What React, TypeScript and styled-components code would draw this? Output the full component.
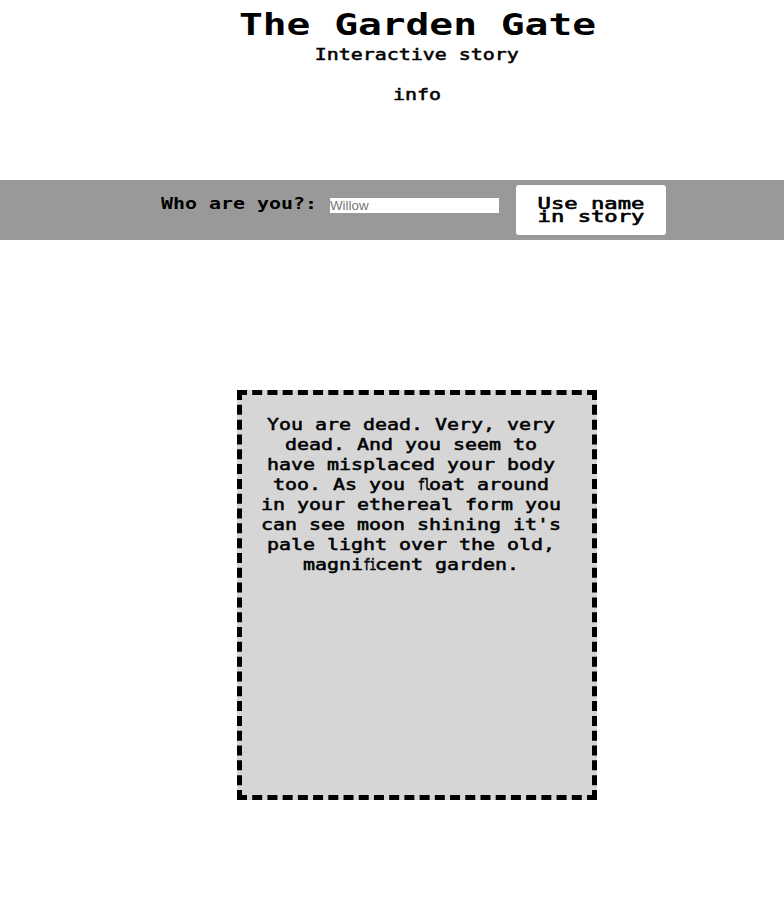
import React from "react";
import styled, { createGlobalStyle } from "styled-components";

const GlobalStyle = createGlobalStyle`
  * { box-sizing: border-box; }
  body { margin: 0; background: #fff; color: #000; overflow-x: hidden; }
`;

const Page = styled.main`
  width: 784px;
  height: 913px;
  overflow: hidden;
  font-family: "DejaVu Sans Mono", monospace;
`;

const Header = styled.header`
  height: 180px;
  padding: 4px 0 0 50px;
  display: flex;
  flex-direction: column;
  align-items: center;
`;

/* Monospace lettering widened to resemble an old terminal face. */
const Wide = styled.span<{ $stretch?: number; $origin?: string }>`
  display: block;
  white-space: nowrap;
  transform: scaleX(${(p) => p.$stretch ?? 1.329});
  transform-origin: ${(p) => p.$origin ?? "center"};
`;

const Title = styled.h1`
  margin: 0;
  font-size: 30px;
  font-weight: 700;
  line-height: 41px;
`;

const Subtitle = styled.p`
  margin: 0;
  font-size: 15px;
  line-height: 20px;
  -webkit-text-stroke: 0.5px #000;
`;

const InfoLink = styled.a`
  margin-top: 20px;
  font-size: 15px;
  line-height: 20px;
  color: #000;
  -webkit-text-stroke: 0.5px #000;
`;

const NameBar = styled.form`
  height: 60px;
  padding-left: 161px;
  display: flex;
  align-items: flex-start;
  background: #999;
`;

const Label = styled.label`
  width: 169px;
  padding-top: 14px;
  font-size: 15px;
  font-weight: 700;
  line-height: 20px;
`;

const NameInput = styled.input`
  width: 169px;
  height: 15px;
  margin: 18px 17px 0 0;
  padding: 0;
  border: 0;
  outline: 0;
  background: #fff;
  font: 13.333px/15px "Liberation Sans", sans-serif;
  &::placeholder { color: #757575; }
`;

const UseButton = styled.button`
  width: 150px;
  height: 50px;
  margin-top: 5px;
  padding: 1px 0 0;
  border: 0;
  border-radius: 3px;
  background: #fff;
  color: #000;
  font: 15px/13px "DejaVu Sans Mono", monospace;
  -webkit-text-stroke: 0.6px #000;
`;

const StoryCard = styled.section`
  width: 360px;
  height: 410px;
  margin: 150px 0 0 237px;
  padding: 20px 12px 0 0;
  border: 5px dashed #000;
  background: #d6d6d6;
`;

const Story = styled.p`
  margin: 0;
  font-size: 15px;
  line-height: 20px;
  text-align: center;
  -webkit-text-stroke: 0.5px #000;
`;

/* Letter pair condensed into one character cell. */
const Pair = styled.span`
  display: inline-block;
  width: 9.03px;
  height: 20px;
  vertical-align: top;
  text-align: left;
  letter-spacing: -1.5px;
  transform: scaleX(0.6);
  transform-origin: left;
`;

const lines: React.ReactNode[] = [
  "You are dead. Very, very",
  "dead. And you seem to",
  "have misplaced your body",
  <>too. As you <Pair>fl</Pair>oat around</>,
  "in your ethereal form you",
  "can see moon shining it's",
  "pale light over the old,",
  <>magni<Pair>fi</Pair>cent garden.</>,
];

export default function App() {
  return (
    <Page>
      <GlobalStyle />
      <Header>
        <Title><Wide $stretch={1.318}>The Garden Gate</Wide></Title>
        <Subtitle><Wide>Interactive story</Wide></Subtitle>
        <InfoLink><Wide>info</Wide></InfoLink>
      </Header>
      <NameBar onSubmit={(e) => e.preventDefault()}>
        <Label htmlFor="name"><Wide $origin="left">Who are you?:</Wide></Label>
        <NameInput id="name" placeholder="Willow" />
        <UseButton type="submit">
          <Wide $stretch={1.478}>Use name<br />in story</Wide>
        </UseButton>
      </NameBar>
      <StoryCard>
        <Story>
          {lines.map((line, i) => <Wide key={i}>{line}</Wide>)}
        </Story>
      </StoryCard>
    </Page>
  );
}
